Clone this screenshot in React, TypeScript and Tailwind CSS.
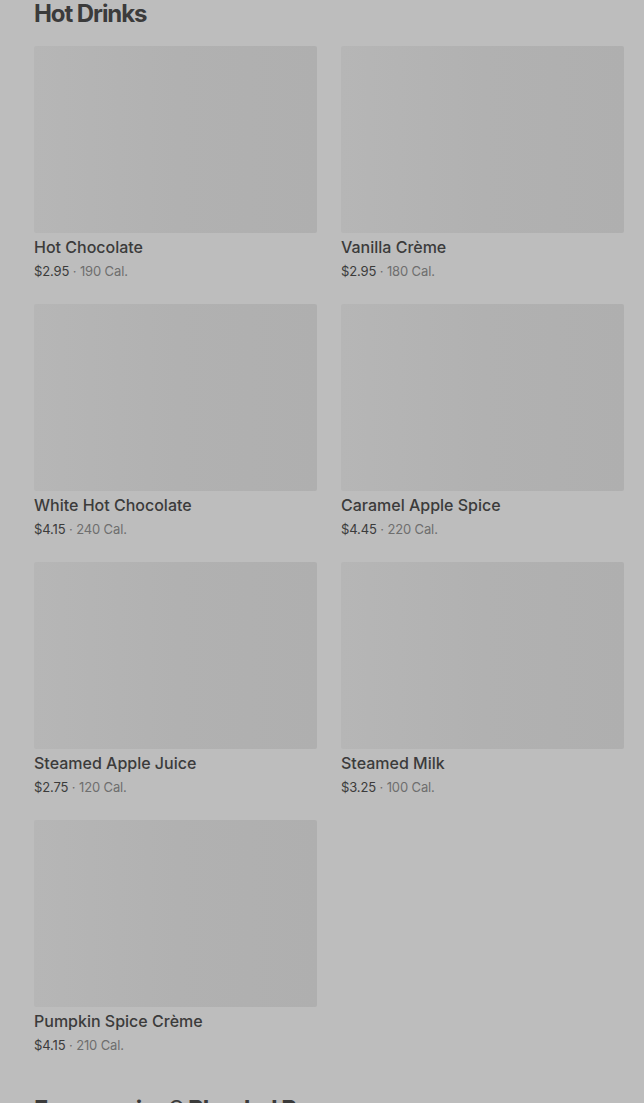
const drinks = [
  { name: "Hot Chocolate", price: "$2.95", cal: "190 Cal." },
  { name: "Vanilla Crème", price: "$2.95", cal: "180 Cal." },
  { name: "White Hot Chocolate", price: "$4.15", cal: "240 Cal." },
  { name: "Caramel Apple Spice", price: "$4.45", cal: "220 Cal." },
  { name: "Steamed Apple Juice", price: "$2.75", cal: "120 Cal." },
  { name: "Steamed Milk", price: "$3.25", cal: "100 Cal." },
  { name: "Pumpkin Spice Crème", price: "$4.15", cal: "210 Cal." },
];

function DrinkCard({ name, price, cal }: { name: string; price: string; cal: string }) {
  return (
    <div className="flex flex-col">
      {/* image placeholder, dimmed by overlay */}
      <div className="h-[187px] w-full rounded-[2px] bg-gradient-to-r from-[#b6b6b6] via-[#b1b1b1] to-[#afafaf]"></div>
      <p className="mt-[4px] text-[16px] leading-[20px] font-medium text-[#3b3b3b]">{name}</p>
      <p className="mt-[5px] text-[13px] leading-[18px] tracking-[-0.01em] text-[#3b3b3b]">
        {price} <span className="text-[#6e6e6e]">· {cal}</span>
      </p>
    </div>
  );
}

export default function App() {
  return (
    <div
      className="min-h-[1103px] w-full overflow-hidden bg-[#bdbdbd]"
      style={{ fontFamily: "Inter, 'Noto Sans', sans-serif" }}
    >
      <div className="pl-[34px] pr-[20px]">
        <section>
          <h2 className="text-[24px] leading-[28px] font-bold tracking-[-0.045em] text-[#3b3b3b]">Hot Drinks</h2>
          <div className="mt-[18px] grid grid-cols-2 gap-x-[24px] gap-y-[24px]">
            {drinks.map((d) => (
              <DrinkCard key={d.name} {...d} />
            ))}
          </div>
        </section>

        <section className="mt-[42px]">
          <h2 className="text-[24px] leading-[28px] font-bold tracking-[-0.045em] text-[#3b3b3b]">
            Frappuccino® Blended Beverages
          </h2>
        </section>
      </div>
    </div>
  );
}
